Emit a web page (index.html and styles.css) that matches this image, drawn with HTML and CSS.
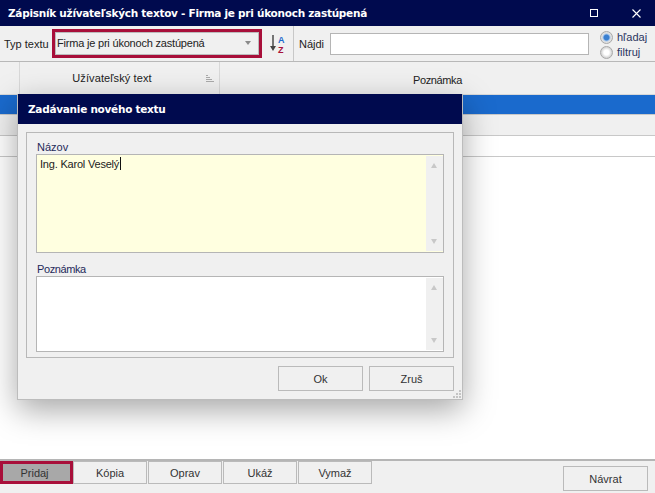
FILE: index.html
```html
<!DOCTYPE html>
<html lang="sk">
<head>
<meta charset="utf-8">
<title>Zápisník užívateľských textov</title>
<link rel="stylesheet" href="styles.css">
</head>
<body>
<div class="window">
  <header class="titlebar">
    <span class="title">Zápisník užívateľských textov - Firma je pri úkonoch zastúpená</span>
    <svg class="winicon max" width="8" height="8" viewBox="0 0 8 8"><rect x=".5" y=".5" width="7" height="7" fill="none" stroke="#fff"/></svg>
    <svg class="winicon close" width="9" height="9" viewBox="0 0 9 9"><path d="M.5.5l8 8M8.5.5l-8 8" stroke="#fff" stroke-width="1.1"/></svg>
  </header>
  <div class="toolbar">
    <span class="typ">Typ textu</span>
    <div class="highlight combo-wrap">
      <div class="combo"><span>Firma je pri úkonoch zastúpená</span><i class="arrow"></i></div>
    </div>
    <div class="sort">
      <svg width="18" height="22" viewBox="0 0 18 22">
        <path d="M5 2v12" stroke="#555" stroke-width="1.6"/><path d="M2 13h6l-3 5z" fill="#444"/>
        <text x="10" y="9.500" class="az a">A</text><text x="10" y="19.500" class="az z">Z</text>
      </svg>
    </div>
    <span class="najdi">Nájdi</span>
    <div class="search"></div>
    <div class="radios">
      <label class="radio"><i class="dot on"></i>hľadaj</label>
      <label class="radio"><i class="dot"></i>filtruj</label>
    </div>
  </div>
  <div class="gridhead">
    <div class="gh-first"></div>
    <div class="gh-user">Užívateľský text
      <svg class="sortmark" width="8" height="7" viewBox="0 0 8 7"><path d="M0 .5h2M0 2.500h4M0 4.500h6M0 6.500h8" stroke="#aaa"/></svg>
    </div>
    <div class="gh-note">Poznámka</div>
  </div>
  <div class="row-selected"></div>
  <div class="row-plain"></div>
  <div class="row-white"></div>
  <div class="grid-empty"></div>
  <footer class="footer">
    <div class="actions">
      <button class="btn primary">Pridaj</button>
      <button class="btn">Kópia</button>
      <button class="btn">Oprav</button>
      <button class="btn">Ukáž</button>
      <button class="btn">Vymaž</button>
    </div>
    <button class="btn back">Návrat</button>
  </footer>

  <section class="dialog">
    <div class="dlg-title">Zadávanie nového textu</div>
    <div class="dlg-body">
      <div class="group">
        <label class="lbl">Názov</label>
        <div class="area name"><div class="area-text">Ing. Karol Veselý<i class="caret"></i></div><div class="sb"><i class="up"></i><i class="down"></i></div></div>
        <label class="lbl lbl2">Poznámka</label>
        <div class="area note"><div class="area-text"></div><div class="sb"><i class="up"></i><i class="down"></i></div></div>
      </div>
      <div class="dlg-actions">
        <button class="btn dlg-btn">Ok</button>
        <button class="btn dlg-btn">Zruš</button>
      </div>
    </div>
    <svg class="grip" width="10" height="10" viewBox="0 0 10 10"><path d="M7 1h2v2H7zM4 4h2v2H4zM7 4h2v2H7zM1 7h2v2H1zM4 7h2v2H4zM7 7h2v2H7z" fill="#c4c4c4"/></svg>
  </section>
</div>
</body>
</html>
```
FILE: styles.css
```css
* { box-sizing: border-box; }
html, body { margin: 0; height: 100%; }
body { font: 11px "Liberation Sans", sans-serif; color: #222; background: #fff; overflow: hidden; }
.window { position: relative; width: 655px; height: 493px; display: flex; flex-direction: column; }

.titlebar { height: 26px; background: #000a4e; color: #fff; display: flex; align-items: center; padding-left: 8px; flex: none; }
.title { font: bold 10.5px "DejaVu Sans", sans-serif; flex: 1; letter-spacing: -.27px; }
.winicon { flex: none; }
.max { margin-right: 34px; }
.close { margin-right: 14px; }

.toolbar { height: 36px; flex: none; background: #f0f0f0; border-bottom: 1px solid #b8b8b8; display: flex; align-items: center; padding-left: 4px; }
.typ { font: 11px "Liberation Sans", sans-serif; width: 48px; flex: none; }
.highlight { border: 3px solid #a80f3a; }
.combo-wrap { width: 210px; height: 29px; flex: none; }
.combo { height: 100%; border: 1px solid #bcbcbc; display: flex; align-items: center; justify-content: space-between; padding: 0 7px 1px 1px; font: 11px "Liberation Sans", sans-serif; letter-spacing: -.2px; }
.arrow { width: 0; height: 0; border: 3.5px solid transparent; border-top: 4px solid #8a8a8a; border-bottom: 0; }
.sort { width: 32px; height: 35px; flex: none; border-right: 1px solid #c8c8c8; display: flex; align-items: center; padding-left: 6px; }
.az { font: bold 9px "Liberation Sans", sans-serif; }
.a { fill: #1a6acd; }
.z { fill: #a80f3a; }
.najdi { font: 11px "Liberation Sans", sans-serif; margin-left: 5px; width: 31px; flex: none; }
.search { width: 259px; height: 22px; flex: none; background: #fff; border: 1px solid #b5b5b5; }
.radios { margin: 2px 0 0 11px; display: flex; flex-direction: column; gap: 1px; }
.radio { display: flex; align-items: center; gap: 4px; height: 14px; font: 11px "Liberation Sans", sans-serif; color: #2a3560; }
.dot { width: 13px; height: 13px; border-radius: 50%; border: 1px solid #a8a8a8; background: radial-gradient(circle, #fff 0 2.500px, #d8d8d8 5px); }
.dot.on { background: radial-gradient(circle, #3a7fd0 0 2.500px, #a8c8ee 3.500px, #e0e0e0 4.500px); }

.gridhead { height: 32px; flex: none; background: #f0f0f0; display: flex; font: 11px "Liberation Sans", sans-serif; }
.gh-first { width: 20px; border-right: 1px solid #d8d8d8; flex: none; }
.gh-user { width: 200px; flex: none; border-right: 1px solid #d8d8d8; display: flex; align-items: center; justify-content: center; position: relative; padding-right: 15px; letter-spacing: .1px; }
.sortmark { position: absolute; right: 5px; top: 13px; }
.gh-note { flex: 1; display: flex; align-items: center; justify-content: center; padding: 4px 0 0 0; letter-spacing: -.4px; }

.row-selected { height: 21px; flex: none; background: #1a6acd; border-top: 1px solid #d8d8d8; border-bottom: 1px solid #c8c8c8; }
.row-plain { height: 21px; flex: none; background: #f0f0f0; border-bottom: 1px solid #c8c8c8; }
.row-white { height: 21px; flex: none; background: #fff; border-bottom: 1px solid #c8c8c8; }
.grid-empty { flex: 1; background: #fff; }

.footer { height: 34px; flex: none; background: #f0f0f0; border-top: 2px solid #b5b5b5; display: flex; justify-content: space-between; position: relative; }
.actions { display: flex; gap: 1px; height: 23px; }
.btn { font: 11px "Liberation Sans", sans-serif; color: #333; background: #f0f0f0; border: 1px solid #bababa; padding: 0; width: 74px; height: 23px; }
.primary { width: 73px; margin-right: -1px; padding-right: 4px; background: #a8a8a8; border: 3px solid #a80f3a; }
.back { width: 85px; height: 25px; margin: 5px 7px 0 0; }

.dialog { position: absolute; left: 17px; top: 94px; width: 446px; height: 306px; background: #f0f0f0; box-shadow: 0 10px 30px rgba(0,0,0,.35); border: 1px solid #bcbcbc; border-top: 0; display: flex; flex-direction: column; }
.dlg-title { height: 30px; flex: none; background: #000a4e; color: #fff; font: bold 10.5px "DejaVu Sans", sans-serif; letter-spacing: -.27px; display: flex; align-items: center; padding-left: 10px; }
.dlg-body { flex: 1; padding: 8px; display: flex; flex-direction: column; }
.group { width: 428px; height: 226px; border: 1px solid #b8b8b8; padding: 7px 9px 0; }
.lbl { display: block; font: 11px/14px "Liberation Sans", sans-serif; color: #1f2a5a; padding-left: 1px; }
.lbl2 { margin-top: 9px; letter-spacing: -.4px; }
.area { border: 1px solid #b5b5b5; display: flex; width: 408px; background: #fff; }
.name { height: 99px; background: #ffffe0; }
.note { height: 76px; }
.area-text { flex: 1; padding: 2px 3px; font: 11px/14px "Liberation Sans", sans-serif; letter-spacing: -.2px; }
.caret { display: inline-block; width: 1px; height: 13px; background: #111; vertical-align: -2px; margin-left: 1px; }
.sb { width: 17px; background: #f0f0f0; margin: 1px 0; position: relative; }
.up, .down { position: absolute; left: 5px; width: 0; height: 0; border: 3.5px solid transparent; }
.up { top: 7px; border-bottom: 5px solid #c8c8c8; border-top: 0; }
.down { bottom: 7px; border-top: 5px solid #c8c8c8; border-bottom: 0; }
.dlg-actions { display: flex; justify-content: flex-end; gap: 6px; margin-top: 8px; }
.dlg-btn { width: 85px; height: 25px; }
.grip { position: absolute; right: 0; bottom: 0; }
```
